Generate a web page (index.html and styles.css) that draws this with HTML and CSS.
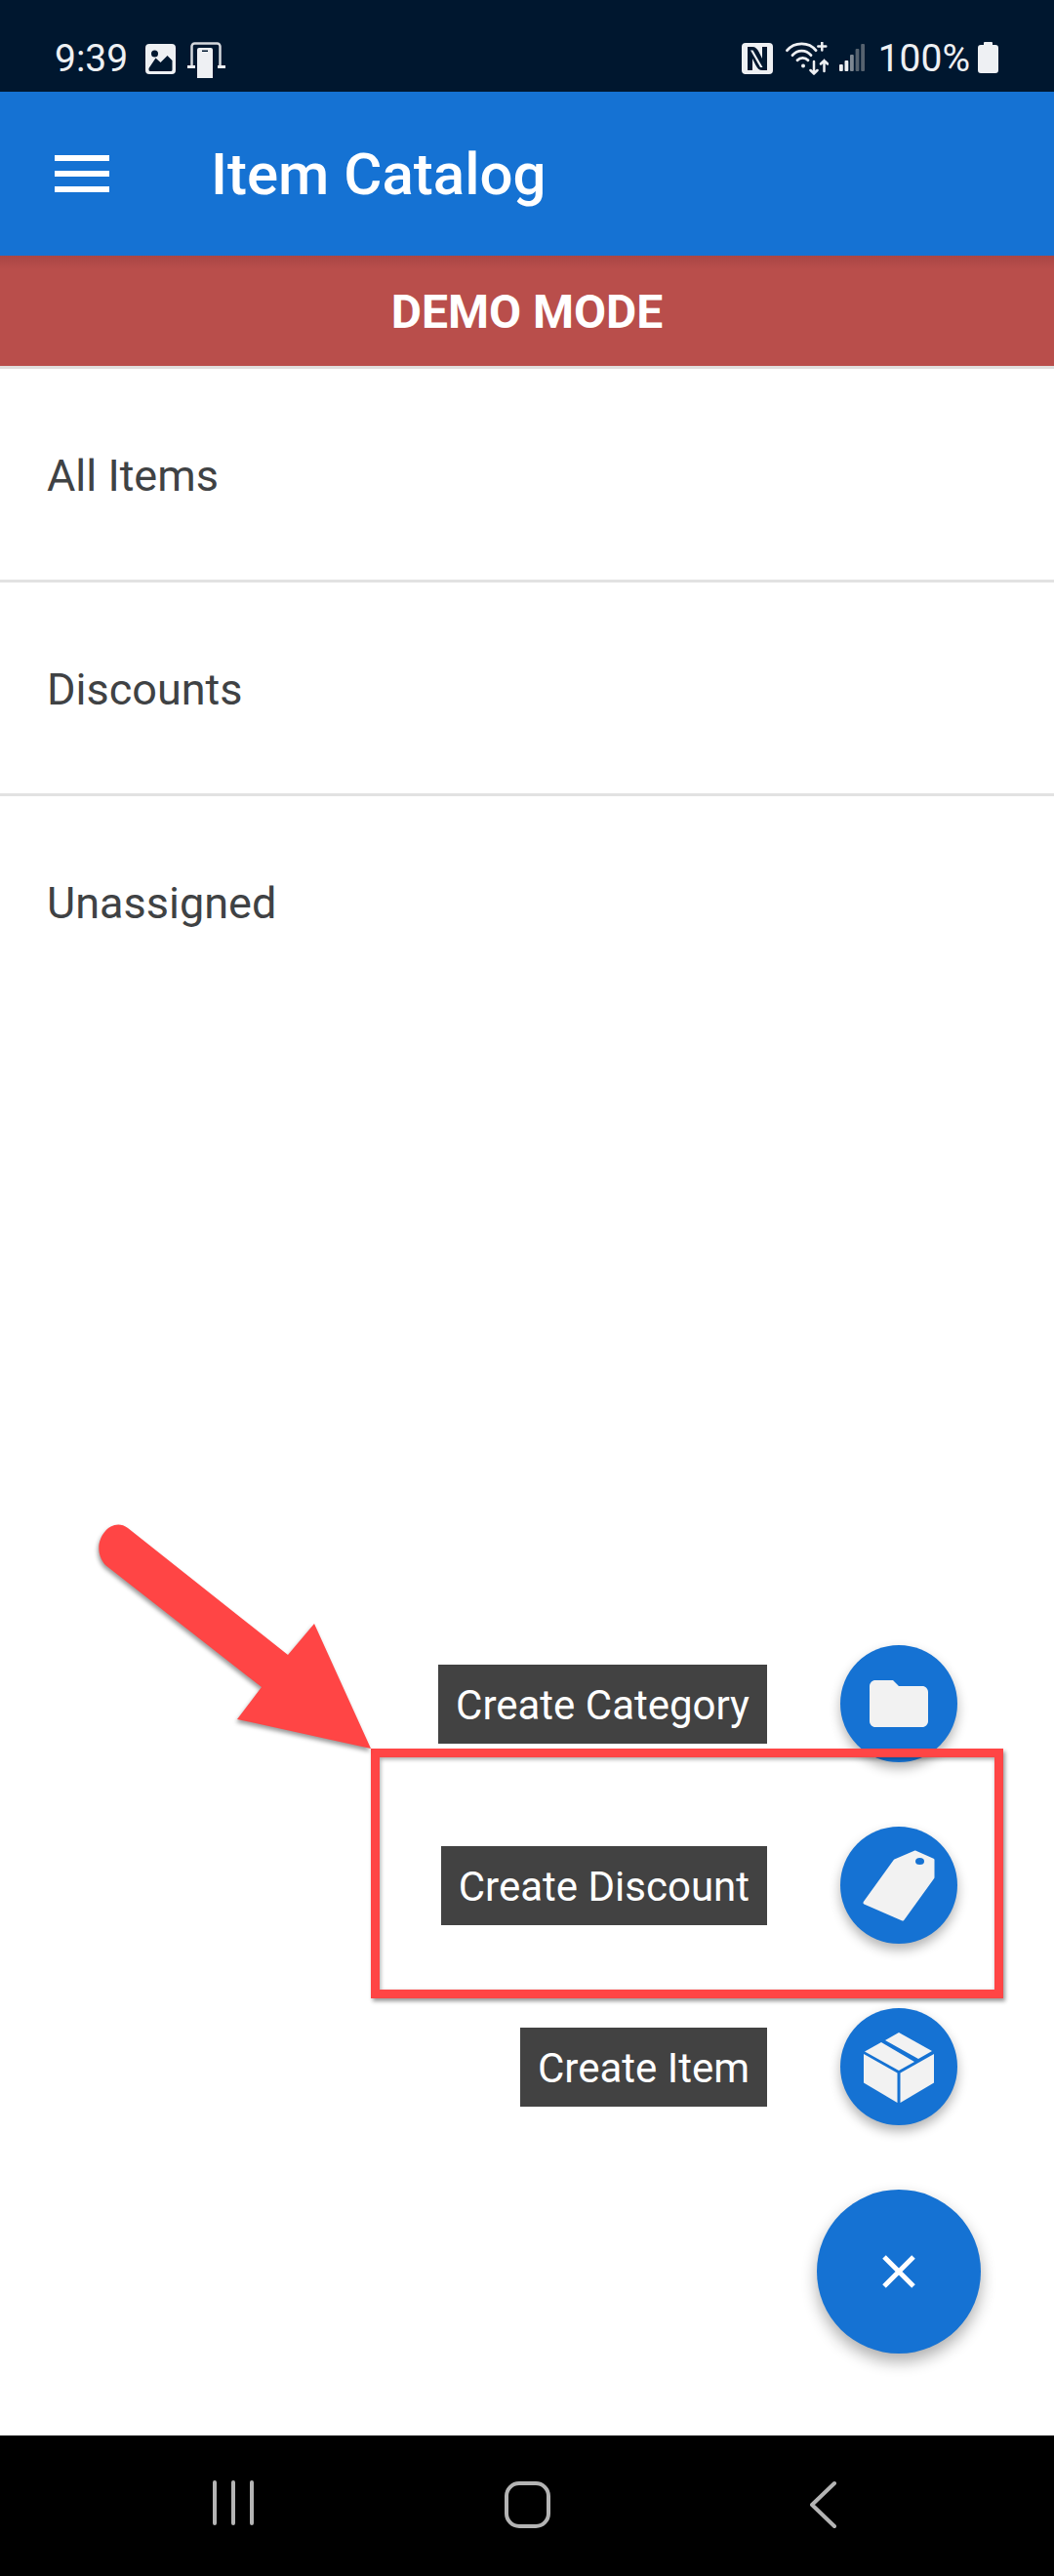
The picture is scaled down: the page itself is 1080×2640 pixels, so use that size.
FILE: index.html
```html
<!DOCTYPE html>
<html lang="en">

<head>
    <meta charset="UTF-8">
    <meta name="viewport" content="width=device-width, initial-scale=1.0">
    <title>Item Catalog</title>
    <link rel="stylesheet" href="styles.css">
</head>

<body>
    <div class="screen">
        <div class="status-bar">
            <div class="status-left">
                <span class="clock">9:39</span>
                <svg class="icon-picture" viewBox="0 0 31 31">
                    <path fill="#eef0f3" fill-rule="evenodd" d="M4 0h23a4 4 0 0 1 4 4v23a4 4 0 0 1-4 4H4a4 4 0 0 1-4-4V4a4 4 0 0 1 4-4zM3.500 25v1.500a1.500 1.500 0 0 0 1.500 1.500h21a1.500 1.500 0 0 0 1.500-1.500V17l-5-5-7 7-5-4.500zM9.500 6.500a3.500 3.500 0 1 0 0 7 3.500 3.500 0 0 0 0-7z"/>
                </svg>
                <svg class="icon-cast" viewBox="0 0 39 37">
                    <path fill="none" stroke="#d5d9de" stroke-width="2.500" d="M4.500 25V4.500a3 3 0 0 1 3-3h23a3 3 0 0 1 3 3V25"/>
                    <path fill="#eef0f3" d="M0 24h8v3H0zM31 24h8v3h-8z"/>
                    <path fill="#eef0f3" fill-rule="evenodd" d="M10 8a2 2 0 0 1 2-2h12a2 2 0 0 1 2 2v29H10zM15 8.500v1.500h6V8.500z"/>
                </svg>
            </div>
            <div class="status-right">
                <svg class="icon-nfc" viewBox="0 0 32 32">
                    <rect width="32" height="32" rx="4" fill="#eef0f3"/>
                    <path fill="#00172f" d="M6 4h5c3 0 5 2 6.500 5l3.500 7V4h5v24h-5c-3 0-5-2-6.500-5L11 16v12H6z"/>
                    <path fill="#eef0f3" d="M9 7.500h2.500l10 17.500H19z"/>
                </svg>
                <svg class="icon-wifi" viewBox="0 0 44 34">
                    <g fill="none" stroke="#eef0f3" stroke-linecap="round">
                        <path stroke-width="2.800" d="M1.500 8.700C9 -0.500 24 -0.500 31 8.700"/>
                        <path stroke-width="2.800" d="M7 13.700C12 7.500 21 7.500 26 13.700"/>
                        <path stroke-width="2.800" d="M12 18.700C15 15.500 20 15.500 23 18.700"/>
                        <path stroke-width="2.500" d="M37.300 0.500v8M33.300 4.500h8"/>
                        <path stroke-width="2.500" d="M29 20v12.500M25.500 29l3.500 3.500 3.500-3.500"/>
                        <path stroke-width="2.500" d="M39.500 30V19M36 22.500l3.500-3.500 3.500 3.500"/>
                    </g>
                    <circle cx="18" cy="24.500" r="2" fill="#eef0f3"/>
                </svg>
                <svg class="icon-signal" viewBox="0 0 27 29">
                    <rect x="0" y="21" width="3.800" height="7" rx="1" fill="#eef0f3"/>
                    <rect x="5.500" y="17" width="3.800" height="11" rx="1" fill="#eef0f3"/>
                    <rect x="11" y="11" width="3.800" height="17" rx="1" fill="#7d8792"/>
                    <rect x="16.600" y="5" width="3.800" height="23" rx="1" fill="#56626f"/>
                    <rect x="22.200" y="0" width="3.800" height="28" rx="1" fill="#56626f"/>
                </svg>
                <span class="battery-text">100%</span>
                <svg class="icon-battery" viewBox="0 0 21 32">
                    <path fill="#eef0f3" d="M7 0h7a1 1 0 0 1 1 1v2h3a3 3 0 0 1 3 3v23a3 3 0 0 1-3 3H3a3 3 0 0 1-3-3V6a3 3 0 0 1 3-3h3V1a1 1 0 0 1 1-1z"/>
                </svg>
            </div>
        </div>

        <header class="app-bar">
            <div class="menu-button">
                <span></span>
                <span></span>
                <span></span>
            </div>
            <h1 class="app-title">Item Catalog</h1>
        </header>

        <div class="demo-banner">DEMO MODE</div>

        <main class="content">
            <ul class="catalog-list">
                <li>All Items</li>
                <li>Discounts</li>
                <li>Unassigned</li>
            </ul>

            <div class="fab-menu">
                <div class="fab-row">
                    <span class="fab-label">Create Category</span>
                    <button class="fab-mini">
                        <svg width="72" height="72" viewBox="0 0 24 24">
                            <path fill="#f2f2f2" d="M10 4H4c-1.100 0-1.990.9-1.990 2L2 18c0 1.100.9 2 2 2h16c1.100 0 2-.9 2-2V8c0-1.100-.9-2-2-2h-8l-2-2z"/>
                        </svg>
                    </button>
                </div>
                <div class="fab-row">
                    <span class="fab-label">Create Discount</span>
                    <button class="fab-mini">
                        <svg width="120" height="120" viewBox="0 0 120 120">
                            <path fill="#f2f2f2" stroke="#f2f2f2" stroke-width="3" stroke-linejoin="round" d="M56 35L77 26L95 34V52L64 95L25 78z"/>
                            <ellipse cx="81.500" cy="35.500" rx="4.500" ry="3.600" fill="#1572d3"/>
                        </svg>
                    </button>
                </div>
                <div class="fab-row">
                    <span class="fab-label">Create Item</span>
                    <button class="fab-mini">
                        <svg width="120" height="120" viewBox="0 0 120 120">
                            <path fill="#f2f2f2" d="M24 47L58.500 66.500V97L24 76.500z"/>
                            <path fill="#f2f2f2" d="M61.500 66.500L96 47V76.500L61.500 97z"/>
                            <path fill="#f2f2f2" d="M46 33L60 25L94 44L80 52z"/>
                            <path fill="#f2f2f2" d="M42 35L76 55L60 64L25 44.500z"/>
                        </svg>
                    </button>
                </div>
                <button class="fab-main">
                    <svg width="36" height="36" viewBox="0 0 36 36">
                        <path stroke="#fff" stroke-width="5" d="M3 3L33 33M33 3L3 33"/>
                    </svg>
                </button>
            </div>
        </main>

        <nav class="nav-bar">
            <svg class="nav-recents" viewBox="0 0 46 46">
                <path fill="none" stroke="#b4b4b4" stroke-width="4" stroke-linecap="round" d="M3 2v42M22 2v42M41 2v42"/>
            </svg>
            <div class="nav-home"></div>
            <svg class="nav-back" viewBox="0 0 28 50">
                <path fill="none" stroke="#b4b4b4" stroke-width="4" stroke-linecap="round" stroke-linejoin="round" d="M25 3L2 25L25 47"/>
            </svg>
        </nav>

        <!-- annotation drawn over the screenshot -->
        <div class="callout-box"></div>
        <svg class="callout-arrow" viewBox="0 0 320 250">
            <path fill="#ff4545" d="M33 30L197 160L224 128L282 256L145 226L170 193L10 68C-8 48 14 16 33 30z"/>
        </svg>
    </div>
</body>

</html>
```

FILE: styles.css
```css
* {
    box-sizing: border-box;
}

body {
    margin: 0;
    background-color: #fff;
    font-family: Roboto, "Liberation Sans", sans-serif;
}

.screen {
    position: relative;
    width: 1080px;
    height: 2640px;
    display: flex;
    flex-direction: column;
    overflow: hidden;
}

.status-bar {
    height: 94px;
    flex-shrink: 0;
    background-color: #00172f;
    color: #eef0f3;
    display: flex;
    justify-content: space-between;
    padding: 0 57px 0 56px;
}

.status-left,
.status-right {
    display: flex;
    align-items: flex-start;
    padding-top: 43px;
}

.clock,
.battery-text {
    font-size: 39px;
    line-height: 34px;
}

.icon-picture {
    width: 31px;
    height: 31px;
    margin: 2px 0 0 18px;
}

.icon-cast {
    width: 39px;
    height: 37px;
    margin: 0 0 0 12px;
}

.icon-nfc {
    width: 32px;
    height: 32px;
    margin-top: 1px;
}

.icon-wifi {
    width: 44px;
    height: 34px;
    margin: 0 0 0 13px;
}

.icon-signal {
    width: 27px;
    height: 29px;
    margin: 2px 0 0 11px;
}

.battery-text {
    margin-left: 13px;
}

.icon-battery {
    width: 21px;
    height: 32px;
    margin: 0 0 0 8px;
}

.app-bar {
    height: 168px;
    flex-shrink: 0;
    background-color: #1572d3;
    display: flex;
    align-items: center;
    padding-left: 56px;
}

.menu-button {
    width: 56px;
    display: flex;
    flex-direction: column;
    gap: 10px;
}

.menu-button span {
    height: 6px;
    background-color: #fff;
}

.app-title {
    margin: 0 0 0 104px;
    color: #fff;
    font-size: 60px;
    font-weight: 500;
}

.demo-banner {
    height: 116px;
    flex-shrink: 0;
    padding-top: 2px;
    background: linear-gradient(#a94644, #b94e4b 14px);
    color: #fff;
    border-bottom: 3px solid #e0dedd;
    font-size: 48px;
    font-weight: 700;
    display: flex;
    align-items: center;
    justify-content: center;
}

.content {
    position: relative;
    flex: 1;
    background-color: #fff;
}

.catalog-list {
    list-style: none;
    margin: 0;
    padding: 0;
}

.catalog-list li {
    height: 219px;
    padding: 3px 0 0 48px;
    display: flex;
    align-items: center;
    color: #3f4244;
    font-size: 45px;
    border-bottom: 3px solid #e2e2e2;
}

.catalog-list li:last-child {
    border-bottom-color: transparent;
}

.fab-menu {
    position: absolute;
    right: 75px;
    bottom: 84px;
    display: flex;
    flex-direction: column;
    align-items: flex-end;
    gap: 66px;
}

.fab-row {
    display: flex;
    align-items: center;
    gap: 75px;
    margin-right: 24px;
}

.fab-label {
    height: 81px;
    padding: 3px 18px 0;
    display: flex;
    align-items: center;
    background-color: #424242;
    color: #fff;
    font-size: 42px;
}

.fab-mini,
.fab-main {
    border: none;
    padding: 0;
    border-radius: 50%;
    background-color: #1572d3;
    display: flex;
    align-items: center;
    justify-content: center;
    box-shadow: 0 6px 12px rgba(0, 0, 0, 0.3);
}

.fab-mini {
    width: 120px;
    height: 120px;
}

.fab-main {
    width: 168px;
    height: 168px;
    box-shadow: 0 8px 16px rgba(0, 0, 0, 0.32);
}

.nav-bar {
    position: relative;
    height: 144px;
    flex-shrink: 0;
    background-color: #000;
}

.nav-recents {
    position: absolute;
    left: 217px;
    top: 46px;
    width: 46px;
    height: 46px;
}

.nav-home {
    position: absolute;
    left: 517px;
    top: 47px;
    width: 47px;
    height: 48px;
    border: 4px solid #b4b4b4;
    border-radius: 15px;
}

.nav-back {
    position: absolute;
    left: 830px;
    top: 46px;
    width: 28px;
    height: 50px;
}

.callout-box {
    position: absolute;
    left: 380px;
    top: 1792px;
    width: 648px;
    height: 256px;
    border: 9px solid #ff4545;
    box-shadow: 2px 3px 4px rgba(0, 0, 0, 0.4), inset 1px 2px 4px rgba(0, 0, 0, 0.35);
}

.callout-arrow {
    position: absolute;
    left: 98px;
    top: 1536px;
    width: 320px;
    height: 250px;
    overflow: visible;
    filter: drop-shadow(-1px 3px 2px rgba(0, 0, 0, 0.4));
}
```
